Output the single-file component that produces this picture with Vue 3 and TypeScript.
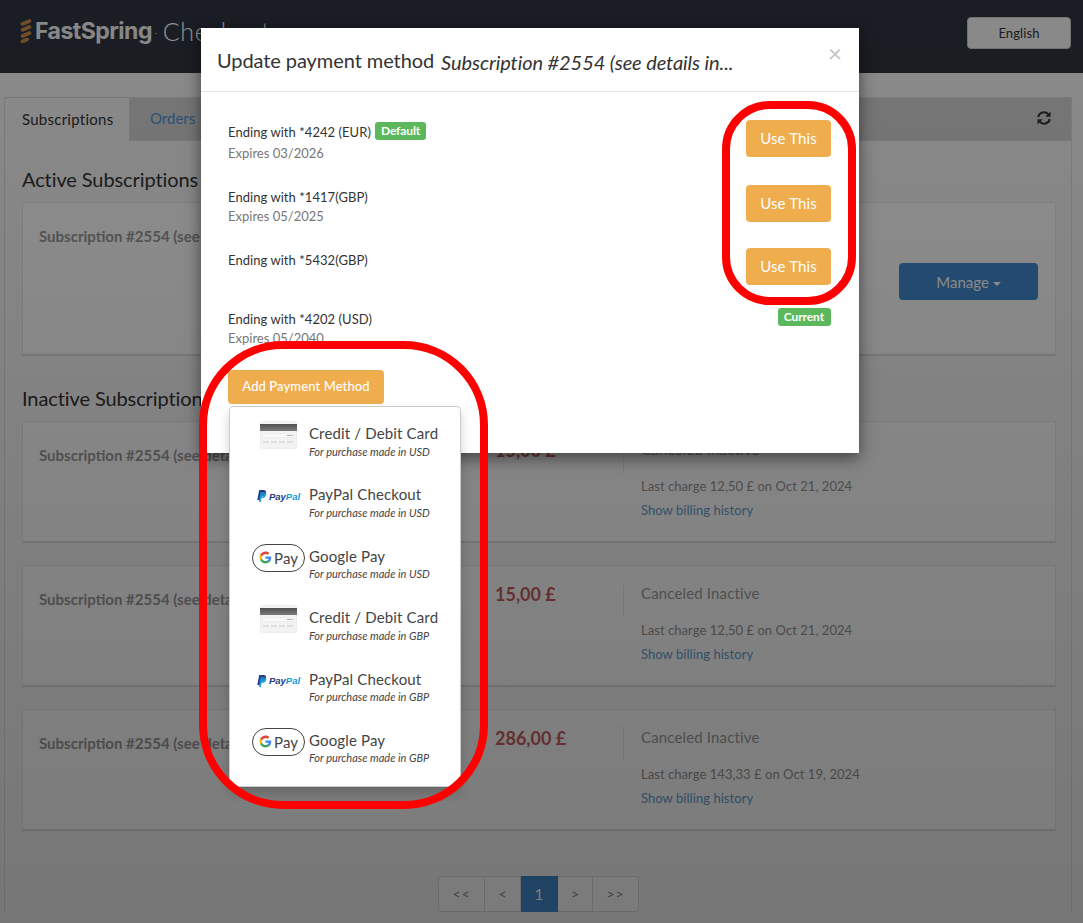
<script setup lang="ts">
interface Saved { label: string; expires?: string; badge?: string; current?: boolean }
interface Method { kind: 'card' | 'paypal' | 'gpay'; title: string; cur: string }
interface Sub { amount: string; charge: string }

const saved: Saved[] = [
  { label: 'Ending with *4242 (EUR)', expires: 'Expires 03/2026', badge: 'Default' },
  { label: 'Ending with *1417(GBP)', expires: 'Expires 05/2025' },
  { label: 'Ending with *5432(GBP)' },
  { label: 'Ending with *4202 (USD)', expires: 'Expires 05/2040', current: true },
]
const names = { card: 'Credit / Debit Card', paypal: 'PayPal Checkout', gpay: 'Google Pay' }
const methods: Method[] = (['USD', 'GBP'] as const).flatMap((cur) =>
  (['card', 'paypal', 'gpay'] as const).map((kind) => ({ kind, title: names[kind], cur })),
)
const inactive: Sub[] = [
  { amount: '15,00 £', charge: 'Last charge 12,50 £ on Oct 21, 2024' },
  { amount: '15,00 £', charge: 'Last charge 12,50 £ on Oct 21, 2024' },
  { amount: '286,00 £', charge: 'Last charge 143,33 £ on Oct 19, 2024' },
]
const pages = ['<<', '<', '1', '>', '>>']
</script>

<template>
  <div class="page">
    <header class="top">
      <div class="logo">
        <svg class="mark" width="12" height="25" viewBox="0 0 12 25">
          <g stroke="#c98a48" stroke-width="3.600" stroke-linecap="round">
            <path d="M2.500 6 9.500 3M2.500 12 9.500 9M2.500 18 9.500 15M2.500 23.500 7 21.500" />
          </g>
        </svg>
        <span class="brand">FastSpring</span><span class="tm">.</span>
        <span class="product">Checkout</span>
      </div>
      <button class="lang">English</button>
    </header>

    <main class="shell">
      <div class="tabs">
        <span class="tab active">Subscriptions</span>
        <span class="tab link">Orders</span>
        <svg class="refresh" width="16" height="16" viewBox="0 0 16 16">
          <path d="M2.300 7A5.700 5.700 0 0 1 12.300 4.300M13.700 9A5.700 5.700 0 0 1 3.700 11.700" fill="none" stroke="#333" stroke-width="2" />
          <path d="M14.500 1.500v5.200H9.300zM1.500 14.500V9.300h5.200z" fill="#333" />
        </svg>
      </div>
      <div class="content">
        <h3>Active Subscriptions</h3>
        <section class="sub tall">
          <div class="sub-title">Subscription #2554 (see details in...)</div>
          <button class="manage">Manage <i class="caret"></i></button>
        </section>

        <h3 class="second">Inactive Subscriptions</h3>
        <section v-for="(s, i) in inactive" :key="i" class="sub">
          <div class="sub-title">Subscription #2554 (see details in...)</div>
          <div class="amount">{{ s.amount }}</div>
          <div class="status">
            <div class="state">Canceled Inactive</div>
            <div class="charge">{{ s.charge }}</div>
            <a class="history">Show billing history</a>
          </div>
        </section>

        <nav class="pager">
          <span v-for="p in pages" :key="p" class="pg" :class="{ on: p === '1' }">{{ p }}</span>
        </nav>
      </div>
    </main>

    <div class="backdrop"></div>

    <div class="modal">
      <div class="m-head">
        <span class="m-title">Update payment method</span>
        <em class="m-sub">Subscription #2554 (see details in...</em>
        <span class="close">×</span>
      </div>
      <div class="m-body">
        <div v-for="s in saved" :key="s.label" class="row">
          <div class="row-text">
            <div class="row-label">{{ s.label }}<span v-if="s.badge" class="badge">{{ s.badge }}</span></div>
            <div v-if="s.expires" class="row-exp">{{ s.expires }}</div>
          </div>
          <span v-if="s.current" class="badge cur">Current</span>
          <button v-else class="use">Use This</button>
        </div>
        <div class="add-wrap">
          <button class="add">Add Payment Method</button>
          <ul class="menu">
            <li v-for="(m, i) in methods" :key="i" class="item">
              <div class="ico">
                <svg v-if="m.kind === 'card'" width="37" height="28" viewBox="0 0 37 28">
                  <defs>
                    <linearGradient id="stripe" x1="0" y1="0" x2="0" y2="1">
                      <stop offset="0" stop-color="#4f4f4f" />
                      <stop offset="1" stop-color="#7c7c7c" />
                    </linearGradient>
                  </defs>
                  <rect x=".5" y=".5" width="36" height="27" rx="2" fill="#f3f3f3" stroke="#ececec" />
                  <rect x="0" y="3" width="37" height="7" fill="url(#stripe)" />
                  <rect x="2.500" y="13" width="32" height="3.500" fill="#fbfbfb" stroke="#e2e2e2" stroke-width=".5" />
                  <rect x="27" y="14" width="6" height="1" fill="#b5b5b5" />
                  <path d="M3 21h6M11 21h6M19 21h6M27 21h6" stroke="#dedede" stroke-width="2" />
                </svg>
                <div v-else-if="m.kind === 'paypal'" class="pp">
                  <svg width="10" height="12" viewBox="0 0 10 12">
                    <path d="M2.200 0H6.400C8.600 0 9.400 1.300 9 3.100 8.500 5.300 7 6.300 5 6.300H3.800L3.100 10H.3z" fill="#253b80" />
                    <path d="M3.600 2.300h3.200C8.600 2.300 9.700 3.300 9.300 5 8.900 7 7.500 8 5.600 8H4.700L4.100 12H1.700z" fill="#179bd7" opacity=".85" />
                  </svg>
                  <span class="pp-t"><b>Pay</b><b class="pal">Pal</b></span>
                </div>
                <div v-else class="gp">
                  <svg width="13" height="13" viewBox="0 0 24 24">
                    <path fill="#4285F4" d="M22.560 12.250c0-.78-.07-1.530-.2-2.250H12v4.260h5.920c-.26 1.370-1.040 2.530-2.210 3.310v2.770h3.570c2.080-1.920 3.280-4.740 3.280-8.090z" />
                    <path fill="#34A853" d="M12 23c2.970 0 5.460-.98 7.280-2.660l-3.570-2.770c-.98.66-2.230 1.060-3.710 1.060-2.860 0-5.290-1.930-6.160-4.530H2.180v2.840C3.990 20.530 7.700 23 12 23z" />
                    <path fill="#FBBC05" d="M5.840 14.090c-.22-.66-.35-1.360-.35-2.090s.13-1.430.35-2.090V7.070H2.180C1.430 8.550 1 10.220 1 12s.43 3.450 1.180 4.930l3.660-2.840z" />
                    <path fill="#EA4335" d="M12 5.380c1.620 0 3.060.56 4.210 1.640l3.150-3.150C17.450 2.090 14.970 1 12 1 7.700 1 3.990 3.470 2.180 7.070l3.660 2.840c.87-2.600 3.300-4.530 6.160-4.530z" />
                  </svg>
                  <span>Pay</span>
                </div>
              </div>
              <div class="it">
                <div class="it-title">{{ m.title }}</div>
                <div class="it-sub">For purchase made in {{ m.cur }}</div>
              </div>
            </li>
          </ul>
        </div>
      </div>
    </div>

    <div class="mark-a"></div>
    <div class="mark-b"></div>
  </div>
</template>

<style>
html, body { margin: 0; background: #f7f7f7; }
</style>

<style scoped>
* { box-sizing: border-box; }
.page {
  position: relative;
  height: 923px;
  overflow: hidden;
  background: #f7f7f7;
  font-family: Lato, "Open Sans", sans-serif;
  font-size: 14px;
  color: #333;
}
.top {
  height: 73px;
  background: #2e343e;
  display: flex;
  align-items: center;
  justify-content: space-between;
  padding: 0 12px 7px 20px;
}
.logo { display: flex; align-items: center; gap: 3px; margin-top: -5px; }
.mark { flex: none; }
.brand { font: 700 23px Inter, Lato, sans-serif; color: #f2f2f2; letter-spacing: -.5px; }
.tm { font-size: 8px; color: #f2f2f2; margin-right: 3px; }
.product { font-size: 25px; font-weight: 300; color: #fff; letter-spacing: .6px; }
.lang {
  width: 104px; height: 32px;
  background: #f5f5f5; border: 1px solid #ccc; border-radius: 4px;
  font: 13px Lato, sans-serif; letter-spacing: .1px; color: #333; padding-bottom: 2px;
}
.shell { margin: 24px 11px 0 4px; border-left: 1px solid #ddd; border-right: 1px solid #ddd; }
.tabs {
  position: relative;
  height: 44px;
  background: #d4d4d4;
  border-top: 1px solid #ddd;
  border-bottom: 1px solid #ddd;
  display: flex;
}
.tab { font-size: 15px; line-height: 42px; }
.active {
  width: 125px; height: 44px;
  padding-left: 17px;
  background: #f7f7f7;
  border: 1px solid #ddd;
  border-left: 0;
  border-bottom: 0;
  border-radius: 3px 3px 0 0;
  margin-top: -1px;
  line-height: 42px;
  letter-spacing: .25px;
}
.link { margin-left: 20px; color: #4d94d6; line-height: 40px; }
.refresh { position: absolute; right: 19px; top: 12px; }
.content { padding: 26px 15px 0 17px; }
h3 { margin: 0; font-size: 20px; font-weight: 400; line-height: 24px; height: 35px; letter-spacing: -.1px; }
h3.second { margin-top: 30px; height: 35px; }
.sub {
  height: 122px;
  margin-bottom: 22px;
  background: #fff;
  border: 1px solid #e8e8e8;
  border-bottom: 2px solid #ddd;
  padding: 23px 16px 0;
  display: flex;
  position: relative;
}
.sub.tall { height: 154px; margin-bottom: 0; justify-content: space-between; padding-right: 17px; }
.sub-title { width: 456px; flex: none; font-size: 15px; font-weight: 700; color: #9a9a9a; line-height: 20px; }
.manage {
  width: 139px; height: 37px;
  margin-top: 37px;
  background: #428ad0; border: 0; border-radius: 4px; color: #fff;
  font: 15px Lato, sans-serif;
}
.caret {
  display: inline-block; width: 0; height: 0; vertical-align: middle;
  border-top: 4px solid #fff; border-left: 4px solid transparent; border-right: 4px solid transparent;
}
.amount { width: 129px; flex: none; font-size: 18px; font-weight: 700; color: #c85f5f; line-height: 24px; margin-top: -7px; }
.status { margin-top: -8px; position: relative; padding-left: 18px; margin-left: -1px; }
.status::before {
  content: ""; position: absolute; left: 0; top: 1px; width: 1px; height: 35px; background: #ececec;
}
.state { font-size: 15px; letter-spacing: .15px; color: #9c9c9c; line-height: 24px; margin-bottom: 13px; }
.charge { font-size: 13px; letter-spacing: .05px; color: #949494; line-height: 24px; }
.history { display: block; font-size: 13px; letter-spacing: .05px; color: #659cce; line-height: 24px; }
.pager { display: flex; justify-content: center; margin-top: 45px; padding-right: 1px; }
.pg {
  width: 36px; height: 36px; text-align: center; line-height: 34px;
  background: #fff; border: 1px solid #ddd; border-left-width: 0; color: #888; font-size: 14px;
}
.pg:first-child { border-left-width: 1px; border-radius: 4px 0 0 4px; width: 47px; letter-spacing: 1px; }
.pg:last-child { border-radius: 0 4px 4px 0; width: 46px; letter-spacing: 1px; }
.pg:nth-child(4) { width: 35px; }
.pg.on { width: 37px; background: #428ad0; border-color: #428ad0; color: #fff; font-size: 16px; }
.backdrop {
  position: absolute; inset: 0;
  background: linear-gradient(rgba(0, 0, 0, .44), rgba(0, 0, 0, .52));
}
.modal {
  position: absolute; left: 201px; top: 28px; width: 658px; height: 425px;
  background: #fff;
  box-shadow: 0 5px 15px rgba(0, 0, 0, .5);
}
.m-head {
  height: 64px;
  border-bottom: 1px solid #e5e5e5;
  display: flex; align-items: flex-start;
  padding: 20px 17px 0 16px;
  position: relative;
}
.m-title { font-size: 20px; color: #333; line-height: 24px; letter-spacing: -.08px; }
.m-sub { font-size: 20px; margin: 2px 0 0 7px; line-height: 24px; color: #333; letter-spacing: -.08px; }
.close { position: absolute; right: 17px; top: 12px; font-size: 24px; color: #c4c4c4; line-height: 26px; }
.m-body { padding: 28px 28px 0 27px; }
.row { display: flex; justify-content: space-between; align-items: flex-start; }
.row:nth-child(1) { height: 65px; }
.row:nth-child(2) { height: 63px; }
.row:nth-child(3) { height: 60px; }
.row:nth-child(4) { height: 62px; }
.row-text { padding-top: 2px; }
.row:nth-child(4) .row-text { padding-top: 1px; }
.row-label { font-size: 13px; letter-spacing: .05px; line-height: 20px; color: #333; }
.row-exp { font-size: 13px; color: #777; line-height: 20px; margin-top: -1px; }
.row:nth-child(1) .row-exp { margin-top: 1px; }
.badge {
  display: inline-block; margin-left: 4px; padding: 0 6px; height: 18px;
  background: #5cb85c; border-radius: 3px;
  color: #fff; font-size: 12px; font-weight: 700; line-height: 17px; vertical-align: 2px; letter-spacing: -.1px;
}
.cur { margin: 0; padding: 0 7px 0 6px; }
.use {
  width: 85px; height: 37px; border: 0; border-radius: 4px;
  background: #f0ad4e; color: #fff; font: 15px Lato, sans-serif; letter-spacing: .1px; padding-bottom: 2px;
}
.add-wrap { position: relative; }
.add {
  width: 156px; height: 34px; border: 0; border-radius: 4px;
  background: #f0ad4e; color: #fff; font: 500 13px Lato, sans-serif; letter-spacing: .1px; padding: 0 0 2px;
}
.menu {
  position: absolute; left: 1px; top: 36px; width: 232px; height: 381px; margin: 0;
  padding: 5px 0; list-style: none;
  background: #fff; border: 1px solid #ccc; border-radius: 4px;
  box-shadow: 0 6px 12px rgba(0, 0, 0, .175);
}
.item { height: 61.400px; display: flex; padding-top: 11px; }
.ico { width: 79px; flex: none; display: flex; justify-content: center; padding-left: 18px; height: 24px; align-items: center; }
.it { flex: 1; }
.it-title { font-size: 15px; letter-spacing: .15px; line-height: 20px; color: #444; }
.it-sub { font-size: 11px; font-style: italic; line-height: 16px; margin-top: .5px; color: #444; }
.pp { display: flex; align-items: center; gap: 2px; }
.pp-t { font: italic 700 9.500px "Liberation Sans", sans-serif; color: #253b80; }
.pal { color: #179bd7; }
.gp {
  width: 53px; height: 28px; flex: none;
  border: 1px solid #444; border-radius: 14px;
  display: flex; align-items: center; justify-content: center; gap: 2px;
  font-size: 15px; color: #444;
}
.mark-a, .mark-b { position: absolute; border: 8px solid #f00; pointer-events: none; }
.mark-a { left: 722px; top: 101px; width: 134px; height: 204px; border-radius: 48px; }
.mark-b { left: 199px; top: 341px; width: 289px; height: 468px; border-radius: 84px; }
</style>
